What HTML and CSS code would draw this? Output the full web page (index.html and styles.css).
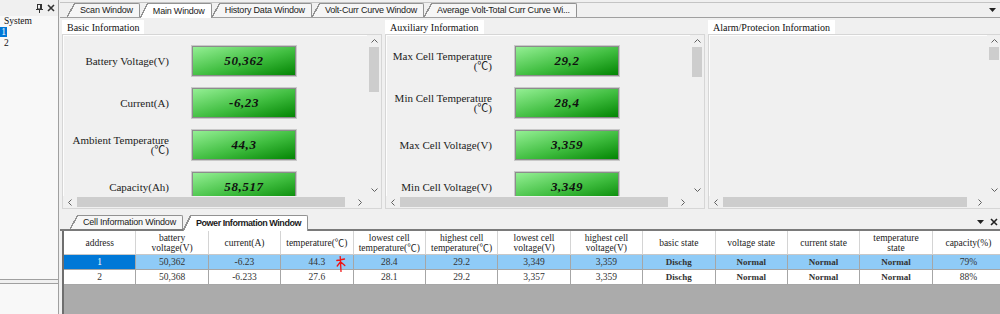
FILE: index.html
```html
<!DOCTYPE html>
<html lang="en">
<head>
    <meta charset="UTF-8">
    <title>Battery Monitor</title>
    <link rel="stylesheet" href="styles.css">
</head>
<body>
<div class="app">
    <aside class="side">
        <div class="side-title">
            <svg class="pin" width="7" height="9" viewBox="0 0 7 9"><rect x="1.5" y="0.5" width="4" height="4.5" fill="none" stroke="#333"/><rect x="4" y="0.5" width="1.5" height="4.5" fill="#333"/><path d="M0 5.5H7M3.5 5.5V9" stroke="#333"/></svg>
            <svg class="close" width="8" height="8" viewBox="0 0 8 8"><path d="M1 1L7 7M7 1L1 7" stroke="#333" stroke-width="1.6"/></svg>
        </div>
        <div class="tree">
            <div class="tree-item">System</div>
            <div class="tree-item"><span class="tree-sel">1</span></div>
            <div class="tree-item">2</div>
        </div>
        <div class="side-lower"></div>
    </aside>

    <main class="work">
        <div class="doc-tabs">
            <div class="tab"><span class="tab-label">Scan Window</span></div>
            <div class="tab active"><span class="tab-label">Main Window</span></div>
            <div class="tab"><span class="tab-label">History Data Window</span></div>
            <div class="tab"><span class="tab-label">Volt-Curr Curve Window</span></div>
            <div class="tab"><span class="tab-label">Average Volt-Total Curr Curve Wi...</span></div>
            <div class="strip-fill"></div>
            <svg class="drop" width="7" height="4" viewBox="0 0 7 4"><path d="M0 0H7L3.5 4Z" fill="#222"/></svg>
        </div>

        <div class="doc-body">
            <section class="group">
                <div class="group-title">Basic Information</div>
                <div class="group-body">
                    <div class="gb-main">
                        <div class="gb-content">
                            <div class="row"><div class="label">Battery Voltage(V)</div><div class="value">50,362</div></div>
                            <div class="row"><div class="label">Current(A)</div><div class="value">-6,23</div></div>
                            <div class="row"><div class="label">Ambient Temperature<br>(℃)</div><div class="value">44,3</div></div>
                            <div class="row"><div class="label">Capacity(Ah)</div><div class="value">58,517</div></div>
                        </div>
                        <div class="vscroll">
                            <span class="sb-btn"><svg width="7" height="4" viewBox="0 0 7 4"><path d="M0.5 3.5L3.5 0.5L6.5 3.5" fill="none" stroke="#606060"/></svg></span>
                            <div class="vthumb thumb-lg"></div>
                            <div class="sb-fill"></div>
                            <span class="sb-btn"><svg width="7" height="4" viewBox="0 0 7 4"><path d="M0.5 0.5L3.5 3.5L6.5 0.5" fill="none" stroke="#606060"/></svg></span>
                        </div>
                    </div>
                    <div class="hscroll">
                        <span class="sb-btn"><svg width="4" height="7" viewBox="0 0 4 7"><path d="M3.5 0.5L0.5 3.5L3.5 6.5" fill="none" stroke="#606060"/></svg></span>
                        <div class="hthumb"></div>
                        <div class="sb-fill"></div>
                        <span class="sb-btn"><svg width="4" height="7" viewBox="0 0 4 7"><path d="M0.5 0.5L3.5 3.5L0.5 6.5" fill="none" stroke="#606060"/></svg></span>
                        <div class="sb-corner"></div>
                    </div>
                </div>
            </section>

            <section class="group">
                <div class="group-title">Auxiliary Information</div>
                <div class="group-body">
                    <div class="gb-main">
                        <div class="gb-content">
                            <div class="row"><div class="label">Max Cell Temperature<br>(℃)</div><div class="value">29,2</div></div>
                            <div class="row"><div class="label">Min Cell Temperature<br>(℃)</div><div class="value">28,4</div></div>
                            <div class="row"><div class="label">Max Cell Voltage(V)</div><div class="value">3,359</div></div>
                            <div class="row"><div class="label">Min Cell Voltage(V)</div><div class="value">3,349</div></div>
                        </div>
                        <div class="vscroll">
                            <span class="sb-btn"><svg width="7" height="4" viewBox="0 0 7 4"><path d="M0.5 3.5L3.5 0.5L6.5 3.5" fill="none" stroke="#606060"/></svg></span>
                            <div class="vthumb thumb-md"></div>
                            <div class="sb-fill"></div>
                            <span class="sb-btn"><svg width="7" height="4" viewBox="0 0 7 4"><path d="M0.5 0.5L3.5 3.5L6.5 0.5" fill="none" stroke="#606060"/></svg></span>
                        </div>
                    </div>
                    <div class="hscroll">
                        <span class="sb-btn"><svg width="4" height="7" viewBox="0 0 4 7"><path d="M3.5 0.5L0.5 3.5L3.5 6.5" fill="none" stroke="#606060"/></svg></span>
                        <div class="hthumb"></div>
                        <div class="sb-fill"></div>
                        <span class="sb-btn"><svg width="4" height="7" viewBox="0 0 4 7"><path d="M0.5 0.5L3.5 3.5L0.5 6.5" fill="none" stroke="#606060"/></svg></span>
                        <div class="sb-corner"></div>
                    </div>
                </div>
            </section>

            <section class="group group-alarm">
                <div class="group-title">Alarm/Protecion Information</div>
                <div class="group-body">
                    <div class="gb-main">
                        <div class="gb-content"></div>
                        <div class="vscroll">
                            <span class="sb-btn"><svg width="7" height="4" viewBox="0 0 7 4"><path d="M0.5 3.5L3.5 0.5L6.5 3.5" fill="none" stroke="#606060"/></svg></span>
                            <div class="vthumb thumb-sm"></div>
                            <div class="sb-fill"></div>
                            <span class="sb-btn"><svg width="7" height="4" viewBox="0 0 7 4"><path d="M0.5 0.5L3.5 3.5L6.5 0.5" fill="none" stroke="#606060"/></svg></span>
                        </div>
                    </div>
                    <div class="hscroll">
                        <span class="sb-btn"><svg width="4" height="7" viewBox="0 0 4 7"><path d="M3.5 0.5L0.5 3.5L3.5 6.5" fill="none" stroke="#606060"/></svg></span>
                        <div class="hthumb hthumb-sm"></div>
                        <div class="sb-fill"></div>
                        <span class="sb-btn"><svg width="4" height="7" viewBox="0 0 4 7"><path d="M0.5 0.5L3.5 3.5L0.5 6.5" fill="none" stroke="#606060"/></svg></span>
                        <div class="sb-corner"></div>
                    </div>
                </div>
            </section>
        </div>

        <div class="panel-tabs">
            <div class="tab"><span class="tab-label">Cell Information Window</span></div>
            <div class="tab active bold"><span class="tab-label">Power Information Window</span></div>
            <div class="strip-fill"></div>
            <svg class="drop" width="7" height="4" viewBox="0 0 7 4"><path d="M0 0H7L3.5 4Z" fill="#222"/></svg>
            <svg class="close" width="8" height="8" viewBox="0 0 8 8"><path d="M1 1L7 7M7 1L1 7" stroke="#222" stroke-width="1.6"/></svg>
        </div>

        <div class="grid">
            <div class="grid-row head">
                <div class="cell">address</div>
                <div class="cell">battery<br>voltage(V)</div>
                <div class="cell">current(A)</div>
                <div class="cell">temperature(℃)</div>
                <div class="cell">lowest cell<br>temperature(℃)</div>
                <div class="cell">highest cell<br>temperature(℃)</div>
                <div class="cell">lowest cell<br>voltage(V)</div>
                <div class="cell">highest cell<br>voltage(V)</div>
                <div class="cell">basic state</div>
                <div class="cell">voltage state</div>
                <div class="cell">current state</div>
                <div class="cell">temperature<br>state</div>
                <div class="cell">capacity(%)</div>
            </div>
            <div class="grid-row selected">
                <div class="cell key">1</div>
                <div class="cell">50,362</div>
                <div class="cell">-6.23</div>
                <div class="cell mark-cell">44.3
                    <svg class="mark" width="10" height="16" viewBox="0 0 10 16"><path d="M4.2 0.5L5 15.5M0.8 4.5L8.5 3M4.4 6L1.2 10M4.8 6L8.8 9.5" fill="none" stroke="#f01414" stroke-width="1.3" stroke-linecap="round"/></svg>
                </div>
                <div class="cell">28.4</div>
                <div class="cell">29.2</div>
                <div class="cell">3,349</div>
                <div class="cell">3,359</div>
                <div class="cell state">Dischg</div>
                <div class="cell state">Normal</div>
                <div class="cell state">Normal</div>
                <div class="cell state">Normal</div>
                <div class="cell">79%</div>
            </div>
            <div class="grid-row">
                <div class="cell">2</div>
                <div class="cell">50,368</div>
                <div class="cell">-6.233</div>
                <div class="cell">27.6</div>
                <div class="cell">28.1</div>
                <div class="cell">29.2</div>
                <div class="cell">3,357</div>
                <div class="cell">3,359</div>
                <div class="cell state">Dischg</div>
                <div class="cell state">Normal</div>
                <div class="cell state">Normal</div>
                <div class="cell state">Normal</div>
                <div class="cell">88%</div>
            </div>
        </div>
    </main>
</div>
</body>
</html>
```
FILE: styles.css
```css
body {
    margin: 0;
    font-family: "Liberation Sans", sans-serif;
    background-color: #f0f0f0;
    color: #111;
}
.app {
    display: flex;
    width: 1000px;
    height: 314px;
    overflow: hidden;
}

/* left dock panel */
.side {
    width: 58px;
    flex-shrink: 0;
    border-right: 1px solid #a0a0a0;
    margin-right: 1px;
    display: flex;
    flex-direction: column;
    background-color: #f0f0f0;
}
.side-title {
    height: 16px;
    display: flex;
    align-items: center;
    justify-content: flex-end;
    gap: 4px;
    padding-right: 3px;
}
.tree {
    flex: 1;
    background-color: #f8f8f8;
    border-bottom: 1px solid #a0a0a0;
    font-family: "Liberation Serif", serif;
    font-size: 9.5px;
}
.tree-item {
    height: 11px;
    line-height: 11px;
    padding-left: 4px;
    white-space: nowrap;
}
.tree-sel {
    display: inline-block;
    margin-left: -4px;
    width: 7px;
    height: 10px;
    line-height: 10px;
    text-align: center;
    background-color: #0078d7;
    color: white;
}
.side-lower {
    height: 30px;
    margin-top: 3px;
    border-top: 1px solid #a0a0a0;
    background-color: #f8f8f8;
}

/* work area */
.work {
    flex: 1;
    min-width: 0;
    display: flex;
    flex-direction: column;
    overflow: hidden;
}
.doc-tabs, .panel-tabs {
    display: flex;
    align-items: flex-end;
    flex-shrink: 0;
    font-family: "Liberation Sans", sans-serif;
    font-size: 9px;
    letter-spacing: -0.2px;
    color: #1a1a1a;
}
.doc-tabs {
    margin-top: 2px;
    height: 14px;
    border-top: 1px solid #c4c4c4;
    border-bottom: 1px solid #a0a0a0;
    padding-left: 7px;
}
.panel-tabs {
    height: 14px;
    padding-top: 3px;
    border-bottom: 2px solid #7a7a7a;
    padding-left: 10px;
}
.tab {
    --tab-bg: #f6f6f6;
    display: flex;
    height: 14px;
    white-space: nowrap;
}
.tab::before {
    content: "";
    width: 8px;
    background: linear-gradient(to bottom right, transparent calc(50% - 0.7px), #929292 calc(50% - 0.7px), #929292 calc(50% + 0.7px), var(--tab-bg) calc(50% + 0.7px));
}
.tab-label {
    background-color: var(--tab-bg);
    border-top: 1px solid #929292;
    border-right: 1px solid #929292;
    border-top-right-radius: 2px;
    padding: 0 6px 0 5px;
    line-height: 13px;
}
.tab.active {
    --tab-bg: #ffffff;
    height: 15px;
    margin-bottom: -1px;
}
.tab.active .tab-label {
    line-height: 14px;
}
.panel-tabs .tab.active {
    margin-bottom: -2px;
    height: 16px;
}
.tab.bold {
    font-weight: bold;
    letter-spacing: -0.45px;
}
.strip-fill {
    flex: 1;
}
.drop {
    align-self: center;
    margin-right: 4px;
}
.panel-tabs .drop {
    margin-right: 6px;
}
.panel-tabs .close {
    align-self: center;
    margin-right: 2px;
}

/* upper information groups */
.doc-body {
    height: 194px;
    box-sizing: border-box;
    flex-shrink: 0;
    display: flex;
    gap: 3px;
    padding: 2px 0 0 2px;
}
.group {
    width: 320px;
    flex-shrink: 0;
    display: flex;
    flex-direction: column;
}
.group-alarm {
    width: 294px;
}
.group-title {
    align-self: flex-start;
    background-color: white;
    height: 14px;
    line-height: 15px;
    padding: 0 5px;
    font-family: "Liberation Serif", serif;
    font-size: 10px;
    white-space: nowrap;
}
.group-body {
    height: 175px;
    box-sizing: border-box;
    border: 1px solid #d6d6d6;
    box-shadow: inset 1px 1px 0 #fdfdfd;
    display: flex;
    flex-direction: column;
}
.gb-main {
    flex: 1;
    min-height: 0;
    display: flex;
}
.gb-content {
    flex: 1;
    overflow: hidden;
    padding-top: 11px;
    display: flex;
    flex-direction: column;
    gap: 12px;
}
.row {
    display: flex;
    align-items: center;
    gap: 23px;
    flex-shrink: 0;
}
.label {
    width: 106px;
    text-align: right;
    font-family: "Liberation Serif", "Noto Sans CJK SC", serif;
    font-size: 11px;
    line-height: 10px;
    color: #222;
    white-space: nowrap;
}
.value {
    width: 104px;
    height: 30px;
    box-sizing: border-box;
    border: 1px solid #8c8c8c;
    box-shadow: 0 0 0 1px #c9c9c9;
    background: linear-gradient(to bottom right, #94ef94, #3fbd3f 55%, #038503);
    display: flex;
    align-items: center;
    justify-content: center;
    font-family: "Liberation Serif", serif;
    font-style: italic;
    font-weight: bold;
    font-size: 13px;
    letter-spacing: 0.6px;
    color: #101010;
}

/* scrollbars */
.vscroll {
    width: 14px;
    display: flex;
    flex-direction: column;
    background-color: #f0f0f0;
}
.hscroll {
    height: 12px;
    display: flex;
    background-color: #f0f0f0;
}
.sb-btn {
    display: flex;
    align-items: center;
    justify-content: center;
    width: 14px;
    height: 12px;
    flex-shrink: 0;
}
.sb-fill {
    flex: 1;
}
.vthumb {
    margin: 0 2px;
    background-color: #cdcdcd;
}
.thumb-lg { height: 45px; }
.thumb-md { height: 30px; }
.thumb-sm { height: 13px; }
.hthumb {
    width: 268px;
    margin: 1px 0;
    background-color: #cdcdcd;
}
.hthumb-sm {
    width: 244px;
}
.sb-corner {
    width: 14px;
}

/* power information grid */
.grid {
    flex: 1;
    background-color: #ababab;
    border-left: 2px solid #6e6e6e;
    margin-left: 2px;
    font-family: "Liberation Serif", "Noto Sans CJK SC", serif;
    font-size: 9.5px;
    overflow: hidden;
}
.grid-row {
    display: grid;
    grid-template-columns: repeat(13, 72.4px);
    height: 15px;
    background-color: white;
}
.grid-row.head {
    height: 24px;
}
.cell {
    display: flex;
    align-items: center;
    justify-content: center;
    text-align: center;
    border-right: 1px solid #a6a6a6;
    border-bottom: 1px solid #a6a6a6;
    line-height: 10px;
    color: #333;
    white-space: nowrap;
    overflow: hidden;
}
.head .cell {
    border-right-color: #d4d4d4;
    border-bottom-color: #c8c8c8;
    color: #222;
}
.selected {
    background-color: #8fcbf7;
}
.selected .key {
    background-color: #0078d7;
    color: white;
}
.state {
    font-weight: bold;
    font-size: 9px;
}
.mark-cell {
    position: relative;
    overflow: visible;
}
.mark {
    position: absolute;
    left: 55px;
    top: 1px;
}
```
